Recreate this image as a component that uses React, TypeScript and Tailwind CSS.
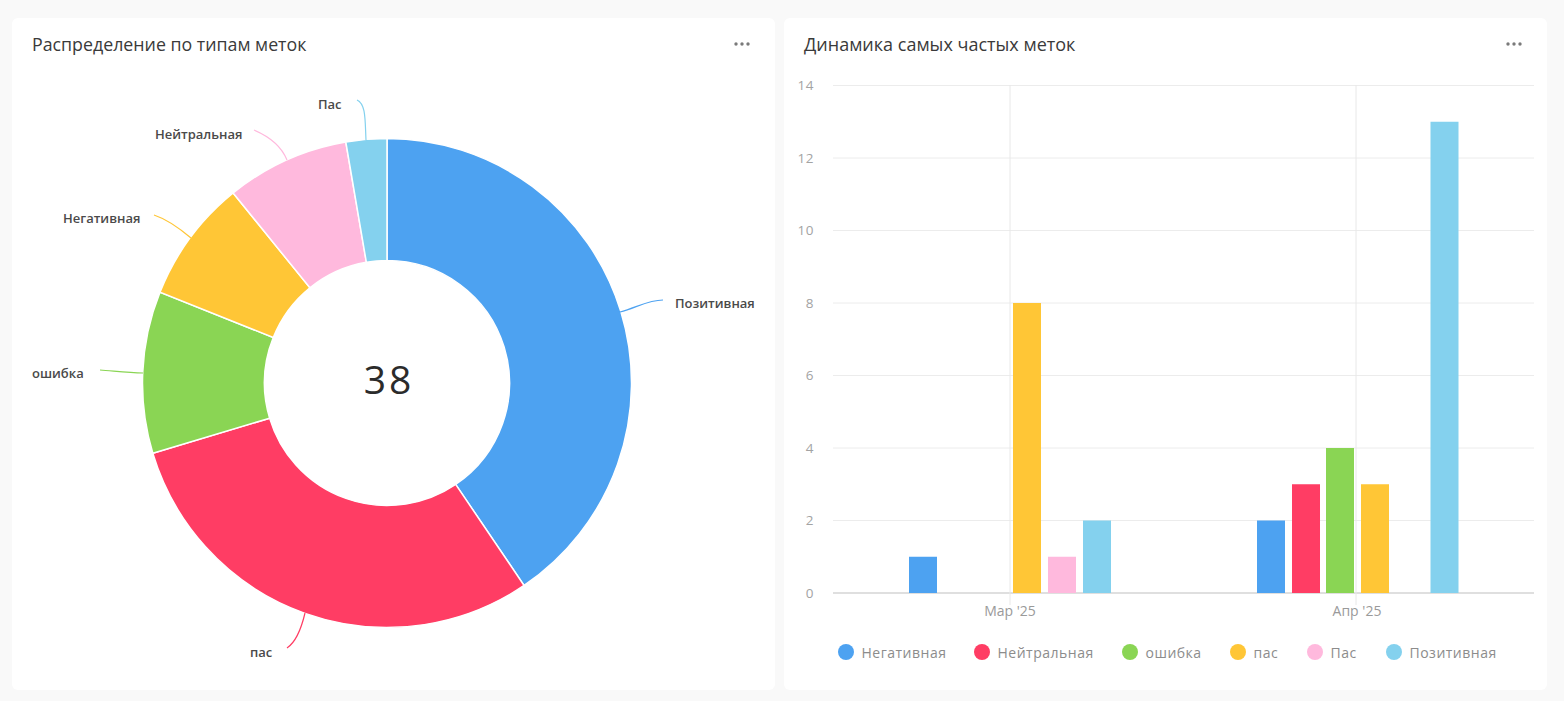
const FONT = "font-['Open_Sans','Noto_Sans',sans-serif]";

const slices = [
  { color: "#4da2f1", from: 0, to: 145.9 },
  { color: "#ff3d64", from: 145.9, to: 253.3 },
  { color: "#8ad554", from: 253.3, to: 291.8 },
  { color: "#ffc636", from: 291.8, to: 321 },
  { color: "#ffb9dd", from: 321, to: 350.3 },
  { color: "#84d1ee", from: 350.3, to: 360 },
];

const CX = 387;
const CY = 383;
const R = 244.5;
const r = 122.5;

function pt(radius: number, deg: number) {
  const a = (deg * Math.PI) / 180;
  return `${(CX + radius * Math.sin(a)).toFixed(2)} ${(CY - radius * Math.cos(a)).toFixed(2)}`;
}

function slicePath(from: number, to: number) {
  const large = to - from > 180 ? 1 : 0;
  return `M ${pt(R, from)} A ${R} ${R} 0 ${large} 1 ${pt(R, to)} L ${pt(r, to)} A ${r} ${r} 0 ${large} 0 ${pt(r, from)} Z`;
}

const pieLabels = [
  { text: "Позитивная", x: 675, y: 308, line: "M620 312 C 636 308, 648 300, 663 300", color: "#4da2f1" },
  { text: "Пас", x: 318, y: 109, line: "M366 140 C 365 120, 366 104, 357 100", color: "#84d1ee" },
  { text: "Нейтральная", x: 155, y: 139, line: "M287 160 C 281 145, 268 136, 254 130", color: "#ffb9dd" },
  { text: "Негативная", x: 63, y: 223, line: "M191 238 C 178 227, 166 219, 154 215", color: "#ffc636" },
  { text: "ошибка", x: 32, y: 378, line: "M143 373 C 128 373, 114 371, 100 370", color: "#8ad554" },
  { text: "пас", x: 250, y: 657, line: "M305 613 C 301 630, 296 642, 287 648", color: "#ff3d64" },
];

const Y0 = 593;
const UNIT = 36.25;
const ticks = [0, 2, 4, 6, 8, 10, 12, 14];
const bars = [
  { x: 909, v: 1, color: "#4da2f1" },
  { x: 1013, v: 8, color: "#ffc636" },
  { x: 1048, v: 1, color: "#ffb9dd" },
  { x: 1083, v: 2, color: "#84d1ee" },
  { x: 1257, v: 2, color: "#4da2f1" },
  { x: 1292, v: 3, color: "#ff3d64" },
  { x: 1326, v: 4, color: "#8ad554" },
  { x: 1361, v: 3, color: "#ffc636" },
  { x: 1430.5, v: 13, color: "#84d1ee" },
];

const legend = [
  { text: "Негативная", color: "#4da2f1", w: "w-[136px]" },
  { text: "Нейтральная", color: "#ff3d64", w: "w-[148px]" },
  { text: "ошибка", color: "#8ad554", w: "w-[108px]" },
  { text: "пас", color: "#ffc636", w: "w-[77px]" },
  { text: "Пас", color: "#ffb9dd", w: "w-[79px]" },
  { text: "Позитивная", color: "#84d1ee", w: "w-auto" },
];

function Dots() {
  return (
    <svg width="18" height="6" viewBox="0 0 18 6" className="block">
      <circle cx="3" cy="3" r="1.7" fill="#7a7a7a" />
      <circle cx="9" cy="3" r="1.7" fill="#7a7a7a" />
      <circle cx="15" cy="3" r="1.7" fill="#7a7a7a" />
    </svg>
  );
}

function Header({ title, size }: { title: string; size: string }) {
  return (
    <div className="flex h-[52px] items-center justify-between pl-[20px] pr-[24px]">
      <span className={`pb-[1px] leading-[52px] text-[#3a3a3a] ${size}`}>{title}</span>
      <Dots />
    </div>
  );
}

export default function App() {
  return (
    <div className={`flex h-[701px] w-[1564px] gap-[9px] overflow-hidden bg-[#f9f9f9] pl-[12px] pt-[18px] ${FONT}`}>
      <div className="h-[672px] w-[763px] rounded-md bg-white">
        <Header title="Распределение по типам меток" size="text-[17.8px]" />
        <svg width="763" height="620" viewBox="12 70 763 620" className="block">
          {slices.map((s) => (
            <path key={s.color} d={slicePath(s.from, s.to)} fill={s.color} stroke="#ffffff" strokeWidth="1.5" />
          ))}
          {pieLabels.map((l) => (
            <g key={l.text}>
              <path d={l.line} fill="none" stroke={l.color} strokeWidth="1.2" />
              <text x={l.x} y={l.y} fontSize="13" fontWeight="600" fill="#4a4a4a">
                {l.text}
              </text>
            </g>
          ))}
          <text x="389" y="394" textAnchor="middle" fontSize="39" letterSpacing="3" fill="#2b2b2b">
            38
          </text>
        </svg>
      </div>

      <div className="h-[672px] w-[763px] rounded-md bg-white">
        <Header title="Динамика самых частых меток" size="text-[18px]" />
        <svg width="763" height="560" viewBox="784 70 763 560" className="block">
          {ticks.map((t) => {
            const y = Y0 - t * UNIT;
            return (
              <g key={t}>
                <line x1="833" x2="1534" y1={y} y2={y} stroke={t === 0 ? "#d4d4d4" : "#ececec"} strokeWidth={t === 0 ? 1.5 : 1} />
                <text x="814" y={y + 4.5} textAnchor="end" fontSize="13.5" letterSpacing="0.5" fill="#a3a3a3">
                  {t}
                </text>
              </g>
            );
          })}
          <line x1="1010" x2="1010" y1="85" y2="605" stroke="#e8e8e8" strokeWidth="1" />
          <line x1="1356" x2="1356" y1="85" y2="605" stroke="#e8e8e8" strokeWidth="1" />
          {bars.map((b) => (
            <rect key={b.x} x={b.x} y={Y0 - b.v * UNIT} width="28" height={b.v * UNIT} fill={b.color} />
          ))}
          <text x="1010" y="616" textAnchor="middle" fontSize="14" fill="#9a9a9a">
            Мар '25
          </text>
          <text x="1357" y="616" textAnchor="middle" fontSize="14" fill="#9a9a9a">
            Апр '25
          </text>
        </svg>
        <div className="flex h-[44px] items-center pl-[53.5px]">
          {legend.map((l) => (
            <div key={l.text} className={`flex items-center gap-[8px] ${l.w}`}>
              <svg width="16" height="16" viewBox="0 0 16 16" className="block shrink-0">
                <circle cx="8" cy="8" r="8" fill={l.color} />
              </svg>
              <span className="text-[14px] tracking-[0.5px] text-[#8c8c8c]">{l.text}</span>
            </div>
          ))}
        </div>
      </div>
    </div>
  );
}
